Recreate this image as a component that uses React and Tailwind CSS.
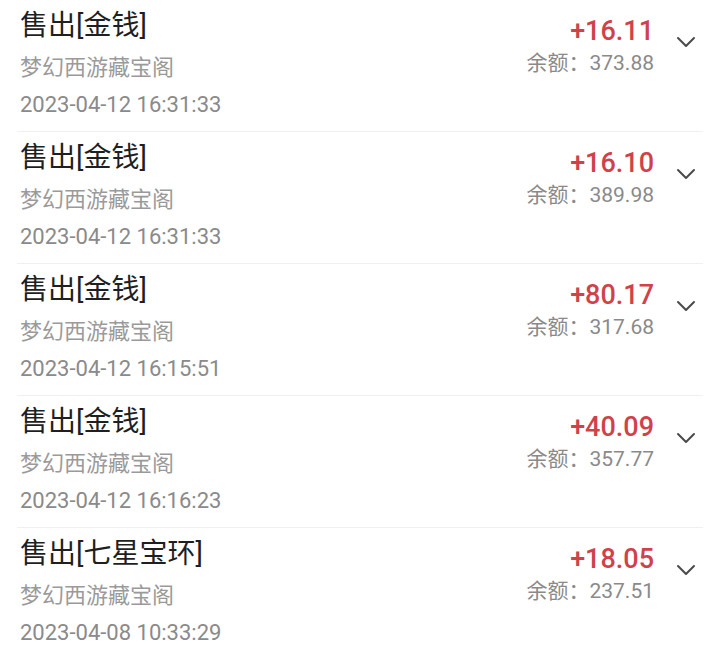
import React from "react";

// transaction records list
const records = [
  { title: "售出[金钱]", amount: "+16.11", balance: "373.88", time: "2023-04-12 16:31:33" },
  { title: "售出[金钱]", amount: "+16.10", balance: "389.98", time: "2023-04-12 16:31:33" },
  { title: "售出[金钱]", amount: "+80.17", balance: "317.68", time: "2023-04-12 16:15:51" },
  { title: "售出[金钱]", amount: "+40.09", balance: "357.77", time: "2023-04-12 16:16:23" },
  { title: "售出[七星宝环]", amount: "+18.05", balance: "237.51", time: "2023-04-08 10:33:29" },
];

const Chevron = () => (
  <svg width="20" height="12" viewBox="0 0 20 12" fill="none">
    <polyline points="2,2 10,10 18,2" stroke="#4a4a4a" strokeWidth="2" strokeLinecap="round" strokeLinejoin="round" />
  </svg>
);

const RecordRow = ({ item }) => (
  <div className="mx-[17px] flex border-b border-[#f0f0f0] pl-[3px] pr-[7px]">
    {/* left: title / source / time */}
    <div className="flex-1 pt-[8px] pb-[11px]">
      <div className="text-[28px] leading-[36px] text-[#1f1f1f]">{item.title}</div>
      <div className="mt-[9px] text-[22px] leading-[30px] text-[#9a9a9a]">梦幻西游藏宝阁</div>
      <div className="mt-[7px] text-[22px] leading-[30px] text-[#8a8a8a]">{item.time}</div>
    </div>
    {/* right: amount / balance */}
    <div className="flex flex-col items-end pt-[14px]">
      <div className="text-[27px] leading-[34px] font-medium text-[#d0424a]">{item.amount}</div>
      <div className="mt-[1px] text-[21px] leading-[28px] text-[#8a8a8a]">余额：{item.balance}</div>
    </div>
    <div className="ml-[22px] pt-[36px]">
      <Chevron />
    </div>
  </div>
);

export default function App() {
  return (
    <div
      className="w-[720px] h-[649px] overflow-hidden bg-white"
      style={{ fontFamily: 'Roboto, "Noto Sans CJK SC", sans-serif' }}
    >
      {records.map((r, i) => (
        <RecordRow key={i} item={r} />
      ))}
    </div>
  );
}
